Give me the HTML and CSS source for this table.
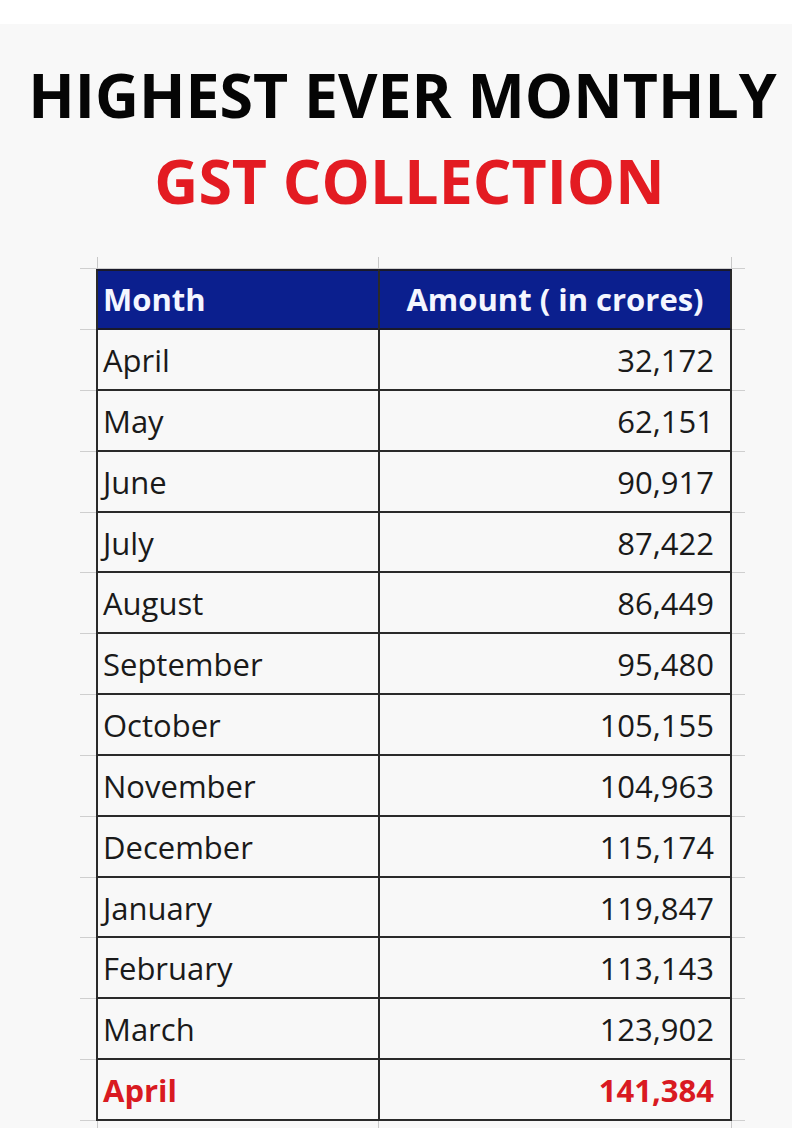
FILE: index.html
```html
<!DOCTYPE html>
<html lang="en">
<head>
<meta charset="utf-8">
<title>Highest Ever Monthly GST Collection</title>
<link rel="stylesheet" href="styles.css">
</head>
<body>
<div class="topbar"></div>
<main class="page">
  <h1 class="title">
    <span class="line1">HIGHEST EVER MONTHLY</span>
    <span class="line2">GST COLLECTION</span>
  </h1>
  <div class="sheet">
    <div class="row stub"><div class="gut"></div><div class="c1"></div><div class="c2"></div><div class="gut-r"></div></div>
    <div class="row head"><div class="gut"></div><div class="c1">Month</div><div class="c2">Amount ( in crores)</div><div class="gut-r"></div></div>
    <div class="row"><div class="gut"></div><div class="c1">April</div><div class="c2">32,172</div><div class="gut-r"></div></div>
    <div class="row"><div class="gut"></div><div class="c1">May</div><div class="c2">62,151</div><div class="gut-r"></div></div>
    <div class="row"><div class="gut"></div><div class="c1">June</div><div class="c2">90,917</div><div class="gut-r"></div></div>
    <div class="row"><div class="gut"></div><div class="c1">July</div><div class="c2">87,422</div><div class="gut-r"></div></div>
    <div class="row"><div class="gut"></div><div class="c1">August</div><div class="c2">86,449</div><div class="gut-r"></div></div>
    <div class="row"><div class="gut"></div><div class="c1">September</div><div class="c2">95,480</div><div class="gut-r"></div></div>
    <div class="row"><div class="gut"></div><div class="c1">October</div><div class="c2">105,155</div><div class="gut-r"></div></div>
    <div class="row"><div class="gut"></div><div class="c1">November</div><div class="c2">104,963</div><div class="gut-r"></div></div>
    <div class="row"><div class="gut"></div><div class="c1">December</div><div class="c2">115,174</div><div class="gut-r"></div></div>
    <div class="row"><div class="gut"></div><div class="c1">January</div><div class="c2">119,847</div><div class="gut-r"></div></div>
    <div class="row"><div class="gut"></div><div class="c1">February</div><div class="c2">113,143</div><div class="gut-r"></div></div>
    <div class="row"><div class="gut"></div><div class="c1">March</div><div class="c2">123,902</div><div class="gut-r"></div></div>
    <div class="row latest"><div class="gut"></div><div class="c1">April</div><div class="c2">141,384</div><div class="gut-r"></div></div>
    <div class="row stub"><div class="gut"></div><div class="c1"></div><div class="c2"></div><div class="gut-r"></div></div>
  </div>
</main>
</body>
</html>
```

FILE: styles.css
```css
html, body {
  margin: 0;
  padding: 0;
}

body {
  background: #f8f8f8;
  font-family: "Open Sans", "Liberation Sans", sans-serif;
  overflow: hidden;
}

.topbar {
  height: 24px;
  background: #ffffff;
}

.page {
  padding-top: 28px;
}

.title {
  margin: 0;
  font-weight: 700;
  font-size: 60.8px;
  line-height: 86px;
  text-align: center;
}

.title span {
  display: block;
}

.line1 {
  color: #050505;
  padding-left: 13px;
}

.line2 {
  color: #e31b22;
  font-size: 60.8px;
  padding-left: 27px;
}

.sheet {
  margin-top: 33px;
  margin-left: 80px;
  width: 665px;
}

.row {
  display: flex;
  height: 60.85px;
  background: linear-gradient(#cfcfcf, #cfcfcf) left bottom / 100% 1px no-repeat;
  font-size: 31px;
  color: #1a1a1a;
}

.gut {
  width: 16px;
}

.gut-r {
  width: 13px;
}

.c1, .c2 {
  box-sizing: border-box;
  border-bottom: 2px solid #2a2a2a;
  line-height: 56px;
  padding-top: 2px;
  white-space: nowrap;
}

.c1 {
  width: 282px;
  border-left: 2px solid #2a2a2a;
  padding-left: 5px;
}

.c2 {
  width: 354px;
  border-left: 2px solid #2a2a2a;
  border-right: 2px solid #2a2a2a;
  text-align: right;
  padding-right: 16px;
}

.row.stub {
  height: 12px;
  background: none;
}

.row.stub .c1,
.row.stub .c2 {
  border-bottom: none;
  border-left: 1px solid #c8c8c8;
  padding: 0;
}

.row.stub .c2 {
  border-right: 1px solid #c8c8c8;
}

.row.stub .c1 {
  margin-left: 1px;
  width: 281px;
}

.row.stub:first-child {
  background: linear-gradient(#cfcfcf, #cfcfcf) left bottom / 100% 1px no-repeat;
}

.row.head {
  height: 61px;
}

.row.head .c1,
.row.head .c2 {
  background: #0b1f8e;
  color: #f4f6ff;
  font-weight: 700;
  font-size: 31px;
  border-top: 2px solid #1a1a2a;
  border-bottom-color: #1a1a2a;
  line-height: 57px;
  padding-top: 0;
}

.row.head .c2 {
  text-align: center;
  padding-right: 0;
}

.row.latest {
  color: #d91a21;
  font-weight: 700;
}
```
